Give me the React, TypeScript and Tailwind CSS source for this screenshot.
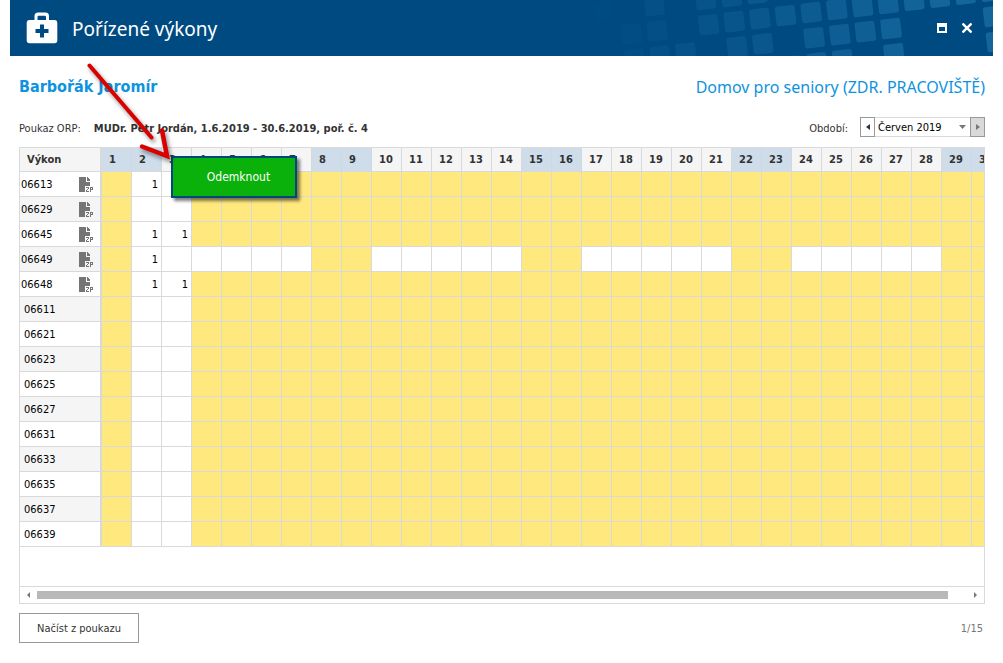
const days = Array.from({ length: 30 }, (_, i) => i + 1);
const weekend = [1, 2, 8, 9, 15, 16, 22, 23, 29, 30];

type Row = { code: string; doc?: boolean; open?: boolean; values?: Record<number, string> };

const rows: Row[] = [
  { code: "06613", doc: true, values: { 2: "1" } },
  { code: "06629", doc: true },
  { code: "06645", doc: true, values: { 2: "1", 3: "1" } },
  { code: "06649", doc: true, open: true, values: { 2: "1" } },
  { code: "06648", doc: true, values: { 2: "1", 3: "1" } },
  { code: "06611" },
  { code: "06621" },
  { code: "06623" },
  { code: "06625" },
  { code: "06627" },
  { code: "06631" },
  { code: "06633" },
  { code: "06635" },
  { code: "06637" },
  { code: "06639" },
];

// [column, row] on the tilted grid of the header decoration
const tiles = [
  [-4, -1], [-2, -1], [0, -1], [1, -1], [2, -1],
  [-3, 0], [-2, 0], [0, 0], [1, 0], [2, 0], [3, 0], [4, 0], [5, 0], [6, 0], [7, 0], [8, 0], [9, 0], [10, 0], [11, 0],
  [-3, 1], [-2, 1], [-1, 1], [1, 1], [2, 1], [4, 1], [5, 1], [6, 1], [7, 1], [11, 1],
  [3, 2], [4, 2], [5, 2], [7, 2], [11, 2],
];

function HeaderTiles() {
  return (
    <svg className="absolute top-0 right-0" width="413" height="56" viewBox="0 0 413 56" aria-hidden="true">
      {tiles.map(([i, j]) => {
        const x = 128.6 + i * 25.65 + j * 2.9;
        const y = 24.7 - i * 3.05 + j * 25.2;
        return (
          <rect
            key={`${i},${j}`}
            x={-10}
            y={-10}
            width={20}
            height={20}
            rx={2.5}
            fill="#3a9fd0"
            opacity={Math.max(0.02, Math.min(0.32, x / 1100))}
            transform={`translate(${x} ${y}) rotate(-6.5)`}
          />
        );
      })}
    </svg>
  );
}

function KitIcon() {
  return (
    <svg width="32" height="32" viewBox="0 0 32 32" aria-hidden="true">
      <path
        fill="#fff"
        fillRule="evenodd"
        d="M8.500 8V4Q8.500 0.500 12 0.500H19.500Q23 0.500 23 4V8H28.500Q31.300 8 31.300 11V28.500Q31.300 31.300 28.500 31.300H3.500Q0.700 31.300 0.700 28.500V11Q0.700 8 3.500 8ZM11.500 8H20V5Q20 3.700 18.800 3.700H12.700Q11.500 3.700 11.500 5ZM14 12.500V17H9.500V21H14V25.500H18V21H22.500V17H18V12.500Z"
      />
    </svg>
  );
}

function DocIcon() {
  return (
    <svg width="15" height="16" viewBox="0 0 15 16" shapeRendering="crispEdges" aria-hidden="true">
      <path fill="#757575" d="M0 0H7V5H11V9H6V15H0ZM8 0H9V1H10V2H11V4H8Z" />
      <path fill="#757575" d="M7 10H10V12H9V13H8V14H10V15H7V13H8V12H9V11H7ZM11 10H14V13H12V15H11ZM12 11V12H13V11Z" fillRule="evenodd" />
    </svg>
  );
}

function Arrow() {
  return (
    <svg
      className="absolute top-14 left-20 z-20 pointer-events-none"
      width="110"
      height="115"
      viewBox="80 56 110 115"
      fill="none"
      stroke="#d90000"
      strokeLinecap="round"
      aria-hidden="true"
    >
      <g style={{ filter: "drop-shadow(2px 3px 2px rgba(0,0,0,.45))" }}>
        <path strokeWidth="4" d="M89.500 65.500L151.500 137.500" />
        <path strokeWidth="4.500" d="M142 146.500L167 156L162 130.500" />
      </g>
    </svg>
  );
}

function cellColor(row: Row, day: number) {
  if (day === 2 || day === 3) return "bg-white";
  if (row.open && !weekend.includes(day)) return "bg-white";
  return "bg-[#ffe97f]";
}

export default function App() {
  return (
    <div className="relative px-[10px] pb-5 bg-white text-[11px] leading-4 text-[#333] font-['DejaVu_Sans_Condensed','DejaVu_Sans',sans-serif]">
      <header className="relative flex h-14 items-center bg-[#004a82] pl-4 pr-[21px] text-white">
        <HeaderTiles />
        <KitIcon />
        <h1 className="ml-[14px] flex-1 pt-px text-[19px] leading-7 font-['Noto_Sans',sans-serif]">Pořízené výkony</h1>
        <div className="relative flex gap-[15px]">
          <button type="button" aria-label="Maximalizovat">
            <svg width="10" height="10" shapeRendering="crispEdges">
              <path fill="#fff" fillRule="evenodd" d="M0 0H10V10H0ZM2 4V8H8V4Z" />
            </svg>
          </button>
          <button type="button" aria-label="Zavřít">
            <svg width="10" height="10" stroke="#fff" strokeWidth="2.400">
              <path d="M0.500 0.500L9.500 9.500M9.500 0.500L0.500 9.500" />
            </svg>
          </button>
        </div>
      </header>

      <main className="pr-2 pl-[9px]">
        <div className="flex items-center justify-between pt-[19px] text-[#0f93de]">
          <h2 className="text-base leading-6 font-bold">Barbořák Jaromír</h2>
          <p className="text-base leading-6 font-['Noto_Sans',sans-serif]">Domov pro seniory (ZDR. PRACOVIŠTĚ)</p>
        </div>

        <div className="flex items-center pt-[18px] pb-[10px]">
          <span className="pt-[3px]">Poukaz ORP:</span>
          <span className="ml-[13px] flex-1 pt-1 font-bold">MUDr. Petr Jordán, 1.6.2019 - 30.6.2019, poř. č. 4</span>
          <label htmlFor="period" className="mr-3 pt-[3px]">Období:</label>
          <button type="button" aria-label="Předchozí" className="flex h-5 w-[15px] items-center justify-center border border-[#999]">
            <svg width="4" height="6" fill="#333"><path d="M4 0V6L0 3Z" /></svg>
          </button>
          <div className="relative">
            <select
              id="period"
              className="block h-5 w-[95px] appearance-none border-y border-[#d9d9d9] pt-px pl-[3px] text-black"
            >
              <option>Červen 2019</option>
            </select>
            <svg className="absolute top-2 right-1 pointer-events-none" width="7" height="4" fill="#777"><path d="M0 0H7L3.500 4Z" /></svg>
          </div>
          <button type="button" aria-label="Další" className="flex h-5 w-[15px] items-center justify-center border border-[#999] bg-[#d9d9d9]">
            <svg width="4" height="6" fill="#777"><path d="M0 0V6L4 3Z" /></svg>
          </button>
        </div>

        <section className="border border-[#d9d9d9]">
          <div className="overflow-hidden pb-[39px]">
            <table className="w-[982px] table-fixed border-separate border-spacing-0 text-black">
              <thead>
                <tr className="h-6 text-left text-[#333]">
                  <th className="w-[82px] border-r-2 border-b border-[#d9d9d9] bg-[#f5f5f5] p-0 pt-px pl-[7px]">Výkon</th>
                  {days.map((d) => (
                    <th
                      key={d}
                      className={`border-r border-b p-0 pt-px pl-[7px] ${
                        weekend.includes(d) ? "border-r-[#ccd9e4] border-b-[#d9d9d9] bg-[#cfdce9]" : "border-[#d9d9d9] bg-[#f5f5f5]"
                      }`}
                    >
                      {d}
                    </th>
                  ))}
                </tr>
              </thead>
              <tbody>
                {rows.map((row, i) => (
                  <tr key={row.code} className="h-[25px]">
                    <td className={`border-r-2 border-b border-[#d9d9d9] p-0 pt-[2px] ${i % 2 ? "bg-[#f5f5f5]" : "bg-white"}`}>
                      <div className={`flex items-center justify-between pr-[6px] ${row.doc ? "pl-px" : "pl-1"}`}>
                        {row.code}
                        {row.doc && <DocIcon />}
                      </div>
                    </td>
                    {days.map((d) => (
                      <td key={d} className={`border-r border-b border-[#d9d9d9] p-0 pt-[2px] pr-[3px] text-right ${cellColor(row, d)}`}>
                        {row.values?.[d]}
                      </td>
                    ))}
                  </tr>
                ))}
              </tbody>
            </table>
          </div>
          <div className="flex h-[17px] items-center border-t border-[#d9d9d9] px-[7px]">
            <svg width="3" height="6" fill="#777"><path d="M3 0V6L0 3Z" /></svg>
            <div className="mx-[7px] flex-1">
              <div className="h-2 w-[98%] bg-[#b8b8b8]" />
            </div>
            <svg width="3" height="6" fill="#777"><path d="M0 0V6L3 3Z" /></svg>
          </div>
        </section>

        <footer className="flex items-center justify-between pt-[9px]">
          <button type="button" className="h-[30px] w-[120px] border border-[#999] pt-px">Načíst z poukazu</button>
          <span className="pt-px pr-[2px] text-[#777]">1/15</span>
        </footer>
      </main>

      <button
        type="button"
        className="absolute top-[156px] left-[171px] z-10 h-[42px] w-[126px] border-2 border-[#00467f] bg-[#0bb10b] pl-[9px] text-xs text-white shadow-[3px_3px_3px_rgba(0,0,0,0.5)]"
      >
        Odemknout
      </button>
      <Arrow />
    </div>
  );
}
